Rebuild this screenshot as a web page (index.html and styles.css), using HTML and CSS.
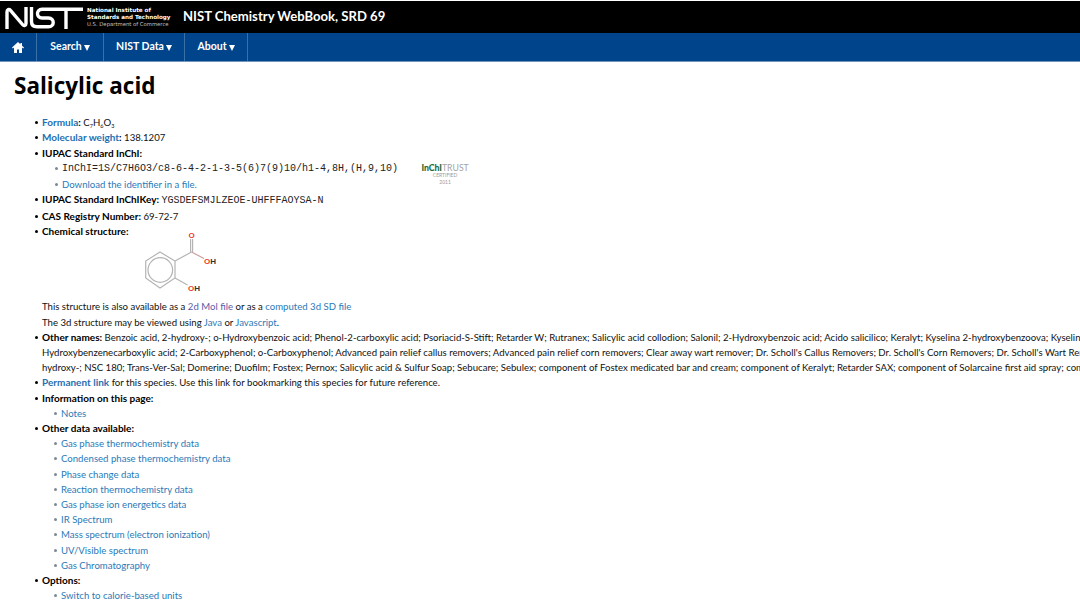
FILE: index.html
```html
<!DOCTYPE html>
<html lang="en">
<head>
<meta charset="utf-8">
<title>Salicylic acid</title>
<link rel="stylesheet" href="styles.css">
</head>
<body>
<header class="brand">
  <svg class="logo" width="78" height="22" viewBox="0 0 78 22" aria-label="NIST">
    <path class="logo-mark" d="M2 22V5C2 2.5 4 1.8 5.5 3.4L17.5 17.5C19 19.2 21 18.5 21 16.5V0M26.5 0V14.5C26.5 18 28.5 19.8 32 19.8H43.5C49.8 19.8 49.8 11 43.5 11H37C31 11 31 2.2 37 2.2H78M61 2.2V22"/>
  </svg>
  <div class="agency">
    <span class="agency-strong">National Institute of</span>
    <span class="agency-strong">Standards and Technology</span>
    <span class="agency-dept">U.S. Department of Commerce</span>
  </div>
  <div class="site-title">NIST Chemistry WebBook, SRD 69</div>
</header>
<nav class="nav">
  <a class="nav-home" href="#" aria-label="Home">
    <svg width="12" height="11" viewBox="0 0 12 11"><path fill="#fff" d="M6 0 0 5.6l.8.9L2 5.4V11h3V7.4h2V11h3V5.4l1.2 1.1.8-.9L10 3.8V1H8.4v1.3z"/></svg>
  </a>
  <a class="nav-item nav-search" href="#">Search<span class="caret"></span></a>
  <a class="nav-item nav-data" href="#">NIST Data<span class="caret"></span></a>
  <a class="nav-item nav-about" href="#">About<span class="caret"></span></a>
</nav>
<main class="content">
  <h1 class="title">Salicylic acid</h1>
  <ul class="facts">
    <li class="tall"><a class="strong-link" href="#">Formula</a><b>:</b> C<sub>7</sub>H<sub>6</sub>O<sub>3</sub></li>
    <li class="tall"><a class="strong-link" href="#">Molecular weight</a><b>:</b> 138.1207</li>
    <li class="tall"><b>IUPAC Standard InChI:</b>
      <ul class="sub">
        <li class="inchi-row"><span class="mono">InChI=1S/C7H6O3/c8-6-4-2-1-3-5(6)7(9)10/h1-4,8H,(H,9,10)</span>
          <span class="trust"><span class="trust-name"><span class="trust-green">InChI</span>TRUST</span><span class="trust-small">CERTIFIED</span><span class="trust-small">2011</span></span>
        </li>
        <li><a href="#">Download the identifier in a file.</a></li>
      </ul>
    </li>
    <li class="tall"><b>IUPAC Standard InChIKey:</b> <span class="mono">YGSDEFSMJLZEOE-UHFFFAOYSA-N</span></li>
    <li class="tall"><b>CAS Registry Number:</b> 69-72-7</li>
    <li><b>Chemical structure:</b>
      <svg class="structure" width="90" height="68" viewBox="130 231 90 68" role="img" aria-label="Salicylic acid structure">
        <g class="bond">
          <path d="M160 252 175 261V278L160 288 145.7 278V261Z"/>
          <circle cx="160.3" cy="270" r="12.3"/>
          <path d="M175 261 191.5 252M175 278 187.5 285"/>
          <path d="M190.6 252V239M192.6 252V239"/>
          <path class="bond-red" d="M191.5 252 204 258.5"/>
        </g>
        <text class="atom red" x="191.6" y="238" text-anchor="middle">O</text>
        <text class="atom" x="204" y="264"><tspan class="red">O</tspan>H</text>
        <text class="atom" x="188" y="291"><tspan class="red">O</tspan>H</text>
      </svg>
      <div>This structure is also available as a <a class="visited" href="#">2d Mol file</a> or as a <a href="#">computed 3d SD file</a></div>
      <div>The 3d structure may be viewed using <a href="#">Java</a> or <a href="#">Javascript</a>.</div>
    </li>
    <li class="names"><b>Other names:</b> Benzoic acid, 2-hydroxy-; o-Hydroxybenzoic acid; Phenol-2-carboxylic acid; Psoriacid-S-Stift; Retarder W; Rutranex; Salicylic acid collodion; Salonil; 2-Hydroxybenzoic acid; Acido salicilico; Keralyt; Kyselina 2-hydroxybenzoova; Kyselina salicylova;<br>Hydroxybenzenecarboxylic acid; 2-Carboxyphenol; o-Carboxyphenol; Advanced pain relief callus removers; Advanced pain relief corn removers; Clear away wart remover; Dr. Scholl's Callus Removers; Dr. Scholl's Corn Removers; Dr. Scholl's Wart Remover Kit;<br>hydroxy-; NSC 180; Trans-Ver-Sal; Domerine; Duofilm; Fostex; Pernox; Salicylic acid &amp; Sulfur Soap; Sebucare; Sebulex; component of Fostex medicated bar and cream; component of Keralyt; Retarder SAX; component of Solarcaine first aid spray; component of</li>
    <li><a class="strong-link" href="#">Permanent link</a> for this species. Use this link for bookmarking this species for future reference.</li>
    <li><b>Information on this page:</b>
      <ul class="sub sub-tight">
        <li><a href="#">Notes</a></li>
      </ul>
    </li>
    <li><b>Other data available:</b>
      <ul class="sub sub-tight">
        <li><a href="#">Gas phase thermochemistry data</a></li>
        <li><a href="#">Condensed phase thermochemistry data</a></li>
        <li><a href="#">Phase change data</a></li>
        <li><a href="#">Reaction thermochemistry data</a></li>
        <li><a href="#">Gas phase ion energetics data</a></li>
        <li><a href="#">IR Spectrum</a></li>
        <li><a href="#">Mass spectrum (electron ionization)</a></li>
        <li><a href="#">UV/Visible spectrum</a></li>
        <li><a href="#">Gas Chromatography</a></li>
      </ul>
    </li>
    <li><b>Options:</b>
      <ul class="sub sub-tight">
        <li><a href="#">Switch to calorie-based units</a></li>
      </ul>
    </li>
  </ul>
</main>
</body>
</html>
```
FILE: styles.css
```css
html, body { margin: 0; padding: 0; height: 611px; overflow: hidden; background: #fff; }
body { font-family: "Lato", "Liberation Sans", sans-serif; font-size: 9.6px; line-height: 15.2px; color: #111; }
a { color: #2a7ab8; text-decoration: none; }
b { font-size: 10px; font-weight: 700; color: #000; }

.brand { display: flex; align-items: center; height: 32px; margin-top: 1px; background: #000; color: #fff; }
.logo { margin: 2px 0 0 5px; flex: none; }
.logo-mark { fill: none; stroke: #fff; stroke-width: 3.4; }
.agency { display: flex; flex-direction: column; margin-left: 4px; width: 94px; font-family: "DejaVu Sans", sans-serif; font-size: 5.6px; line-height: 7px; white-space: nowrap; }
.agency-strong { font-weight: 700; }
.agency-dept { color: #c4c4c4; font-size: 5.3px; }
.site-title { margin-left: 2px; font-family: "Lato", sans-serif; font-size: 13.1px; font-weight: 700; white-space: nowrap; }

.nav { display: flex; height: 29px; box-sizing: border-box; background: #00458c; border-bottom: 1px solid #6f94bb; }
.nav-home, .nav-item { display: flex; align-items: center; box-sizing: border-box; border-right: 1px solid #3a6fa8; color: #fff; font-weight: 700; font-size: 10.5px; }
.nav-home { width: 37px; justify-content: center; }
.nav-item { justify-content: center; }
.nav-search { width: 67px; }
.nav-data { width: 81px; }
.nav-about { width: 63px; }
.caret { width: 0; height: 0; margin: 1px 0 0 2px; border-left: 3.5px solid transparent; border-right: 3.5px solid transparent; border-top: 6px solid #fff; }

.content { width: 1600px; }
.title { margin: 0; padding: 8px 0 0 14px; font-family: "Open Sans", sans-serif; font-size: 22.5px; line-height: 32px; font-weight: 700; color: #000; }
.facts { margin: 13px 0 0; padding: 0 0 0 42px; list-style: none; }
.facts > li { position: relative; }
.facts > .tall { line-height: 15.45px; }
.facts > li::before { content: ""; position: absolute; left: -7px; top: 6px; width: 3px; height: 3px; border-radius: 50%; background: #000; }
.sub { margin: 0; padding: 0 0 0 20px; list-style: none; }
.sub-tight { padding-left: 19px; }
.sub > li { position: relative; }
.sub > li::before { content: ""; position: absolute; left: -7px; top: 6px; width: 3px; height: 3px; border-radius: 50%; background: #7d8a94; }
.mono { font-family: "Liberation Mono", monospace; font-size: 10px; color: #222; }
.strong-link { font-size: 10px; font-weight: 700; color: #1f6fb2; }
.visited { color: #5a5aa8; }
sub { font-size: 5.5px; line-height: 0; vertical-align: -2px; }
.inchi-row { display: flex; align-items: flex-start; }
.trust { display: flex; flex-direction: column; align-items: center; margin: 0 0 -6px 24px; width: 46px; height: 21px; color: #9a9a9a; }
.trust-name { font-size: 8.7px; line-height: 9px; margin-top: 2px; color: #a4a4a4; }
.trust-green { color: #1d6b3a; font-weight: 900; }
.trust-small { font-size: 5px; line-height: 7px; }
.structure { display: block; margin: -8px 0 0 88px; }
.bond { fill: none; stroke: #b4b4b4; stroke-width: 1.2; }
.bond-red { stroke: #c9a0a0; }
.atom { font-family: "Liberation Sans", sans-serif; font-size: 8px; font-weight: 700; fill: #333; }
.red { fill: #e8402f; }
```
